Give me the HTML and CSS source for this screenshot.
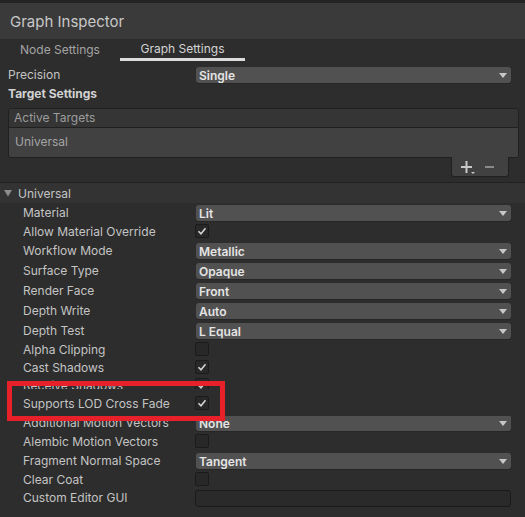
FILE: index.html
```html
<!DOCTYPE html>
<html>
<head>
<meta charset="utf-8">
<link rel="stylesheet" href="styles.css">
</head>
<body>
<div class="panel">
  <div class="topstrip"></div>
  <div class="header">Graph Inspector</div>
  <div class="tabs">
    <div class="tab">Node Settings</div>
    <div class="tab active">Graph Settings</div>
  </div>
  <div class="row dd-row top-row">
    <div class="label top-label">Precision</div>
    <div class="value"><div class="dropdown"><span>Single</span><svg class="arrow" width="8" height="5" viewBox="0 0 8 5"><polygon points="0,0 8,0 4,5" /></svg></div></div>
  </div>
  <div class="section-title">Target Settings</div>
  <div class="list">
    <div class="list-head">Active Targets</div>
    <div class="list-item">Universal</div>
  </div>
  <div class="list-footer-wrap">
    <div class="list-footer">
      <svg width="16" height="14" viewBox="0 0 16 14" class="plus"><rect x="0" y="5" width="11" height="2"/><rect x="4.5" y="0" width="2" height="12"/><polygon points="10,11 14,11 12,13"/></svg>
      <svg width="10" height="14" viewBox="0 0 10 14" class="minus"><rect x="0" y="6" width="9" height="2"/></svg>
    </div>
  </div>
  <div class="foldout">
    <svg class="fold-arrow" width="8" height="7" viewBox="0 0 8 7"><polygon points="0,0 8,0 4,6.5"/></svg>
    <span>Universal</span>
  </div>

  <div class="row dd-row"><div class="label">Material</div><div class="value"><div class="dropdown"><span>Lit</span><svg class="arrow" width="8" height="5" viewBox="0 0 8 5"><polygon points="0,0 8,0 4,5" /></svg></div></div></div>
  <div class="row cb-row"><div class="label">Allow Material Override</div><div class="value"><div class="checkbox"><svg width="12" height="12" viewBox="0 0 12 12"><polyline points="2.5,6.2 5,8.7 9.5,3.3"/></svg></div></div></div>
  <div class="row dd-row"><div class="label">Workflow Mode</div><div class="value"><div class="dropdown"><span>Metallic</span><svg class="arrow" width="8" height="5" viewBox="0 0 8 5"><polygon points="0,0 8,0 4,5" /></svg></div></div></div>
  <div class="row dd-row"><div class="label">Surface Type</div><div class="value"><div class="dropdown"><span>Opaque</span><svg class="arrow" width="8" height="5" viewBox="0 0 8 5"><polygon points="0,0 8,0 4,5" /></svg></div></div></div>
  <div class="row dd-row"><div class="label">Render Face</div><div class="value"><div class="dropdown"><span>Front</span><svg class="arrow" width="8" height="5" viewBox="0 0 8 5"><polygon points="0,0 8,0 4,5" /></svg></div></div></div>
  <div class="row dd-row"><div class="label">Depth Write</div><div class="value"><div class="dropdown"><span>Auto</span><svg class="arrow" width="8" height="5" viewBox="0 0 8 5"><polygon points="0,0 8,0 4,5" /></svg></div></div></div>
  <div class="row dd-row"><div class="label">Depth Test</div><div class="value"><div class="dropdown"><span>L Equal</span><svg class="arrow" width="8" height="5" viewBox="0 0 8 5"><polygon points="0,0 8,0 4,5" /></svg></div></div></div>
  <div class="row cb-row"><div class="label">Alpha Clipping</div><div class="value"><div class="checkbox"></div></div></div>
  <div class="row cb-row"><div class="label">Cast Shadows</div><div class="value"><div class="checkbox"><svg width="12" height="12" viewBox="0 0 12 12"><polyline points="2.5,6.2 5,8.7 9.5,3.3"/></svg></div></div></div>
  <div class="row cb-row"><div class="label">Receive Shadows</div><div class="value"><div class="checkbox"><svg width="12" height="12" viewBox="0 0 12 12"><polyline points="2.5,6.2 5,8.7 9.5,3.3"/></svg></div></div></div>
  <div class="row cb-row pasted"><div class="label">Supports LOD Cross Fade</div><div class="value"><div class="checkbox"><svg width="12" height="12" viewBox="0 0 12 12"><polyline points="2.5,6.2 5,8.7 9.5,3.3"/></svg></div></div></div>
  <div class="row dd-row"><div class="label">Additional Motion Vectors</div><div class="value"><div class="dropdown"><span>None</span><svg class="arrow" width="8" height="5" viewBox="0 0 8 5"><polygon points="0,0 8,0 4,5" /></svg></div></div></div>
  <div class="row cb-row"><div class="label">Alembic Motion Vectors</div><div class="value"><div class="checkbox"></div></div></div>
  <div class="row dd-row"><div class="label">Fragment Normal Space</div><div class="value"><div class="dropdown"><span>Tangent</span><svg class="arrow" width="8" height="5" viewBox="0 0 8 5"><polygon points="0,0 8,0 4,5" /></svg></div></div></div>
  <div class="row cb-row"><div class="label">Clear Coat</div><div class="value"><div class="checkbox"></div></div></div>
  <div class="row tf-row"><div class="label">Custom Editor GUI</div><div class="value"><div class="textfield"></div></div></div>
</div>
</body>
</html>
```
FILE: styles.css
```css
html, body {
  margin: 0;
  padding: 0;
  background: #2d2d2d;
}
.panel {
  width: 525px;
  height: 517px;
  overflow: hidden;
  background: #2d2d2d;
  font-family: Inter, "Noto Sans", sans-serif;
  font-size: 12px;
  color: #c4c4c4;
}
.topstrip {
  height: 3px;
  background: #232323;
}
.header {
  height: 36px;
  background: #3a3a3a;
  display: flex;
  align-items: center;
  padding-left: 10px;
  font-size: 15px;
  color: #c8c8c8;
}
.tabs {
  display: flex;
  height: 22px;
}
.tab {
  width: 120px;
  display: flex;
  align-items: center;
  justify-content: center;
  color: #a4a4a4;
  box-sizing: border-box;
  padding-bottom: 1px;
}
.tab.active {
  width: 125px;
  color: #d4d4d4;
  border-bottom: 3px solid #dcdcdc;
  padding-bottom: 0;
}
.row {
  display: flex;
  align-items: flex-start;
}
.label {
  width: 173px;
  padding-left: 23px;
  white-space: nowrap;
  flex: none;
}
.value {
  width: 315px;
  flex: none;
}
.dd-row { height: 20px; }
.dd-row .label { line-height: 19px; }
.cb-row { height: 18px; }
.cb-row .label { line-height: 17px; }
.tf-row { height: 20px; }
.tf-row .label { line-height: 18px; }
.top-row { margin-top: 4px; }
.top-label { padding-left: 8px; width: 188px; }
.dropdown {
  margin-top: 2px;
  height: 16px;
  background: #515151;
  border-radius: 3px;
  display: flex;
  align-items: center;
  justify-content: space-between;
  padding: 0 4px 0 3px;
  font-weight: 600;
  color: #e4e4e4;
  box-shadow: 0 1px 0 #262626;
}
.arrow { fill: #c8c8c8; margin-top: 1px; }
.section-title {
  height: 16px;
  line-height: 17px;
  padding-left: 8px;
  font-weight: 700;
  color: #d2d2d2;
}
.list {
  margin: 7px 6px 0 8px;
  border: 1px solid #202020;
  border-radius: 3px;
  overflow: hidden;
}
.list-head {
  height: 18px;
  line-height: 18px;
  background: #353535;
  padding-left: 5px;
  color: #9c9c9c;
  border-bottom: 1px solid #202020;
}
.list-item {
  height: 29px;
  line-height: 27px;
  background: #414141;
  padding-left: 6px;
  color: #a4a4a4;
}
.list-footer-wrap {
  display: flex;
  justify-content: flex-end;
  padding-right: 16px;
}
.list-footer {
  width: 54px;
  height: 18px;
  background: #414141;
  border: 1px solid #202020;
  border-top: none;
  border-radius: 0 0 3px 3px;
  display: flex;
  align-items: center;
  padding-left: 2px;
  box-sizing: content-box;
  margin-top: -1px;
  padding-top: 1px;
}
.plus { fill: #c8c8c8; margin-left: 7px; margin-top: 1px; }
.minus { fill: #8a8a8a; margin-left: 8px; }
.foldout {
  margin-top: 5px;
  height: 20px;
  border-top: 1px solid #222222;
  background: #333333;
  display: flex;
  align-items: center;
  padding-left: 4px;
}
.fold-arrow { fill: #8c8c8c; margin-right: 6px; }
.checkbox {
  margin-top: 1px;
  margin-left: -1px;
  width: 12px;
  height: 12px;
  background: #282828;
  border: 1px solid #1b1b1b;
  border-radius: 2px;
  display: flex;
  align-items: center;
  justify-content: center;
}
.checkbox svg polyline {
  fill: none;
  stroke: #d4d4d4;
  stroke-width: 1.6;
}
.textfield {
  margin-top: 1px;
  margin-left: -1px;
  height: 15px;
  width: 314px;
  background: #2a2a2a;
  border: 1px solid #1a1a1a;
  border-radius: 3px;
}
.pasted {
  position: relative;
  z-index: 1;
  background: #2d2d2d;
  margin-top: -6px;
  padding-top: 6px;
  margin-bottom: -3px;
  padding-bottom: 3px;
  height: 18px;
}
.pasted::after {
  content: "";
  position: absolute;
  left: 7px;
  top: -8px;
  bottom: -5px;
  width: 208px;
  border: 5px solid #e8202a;
}
```
